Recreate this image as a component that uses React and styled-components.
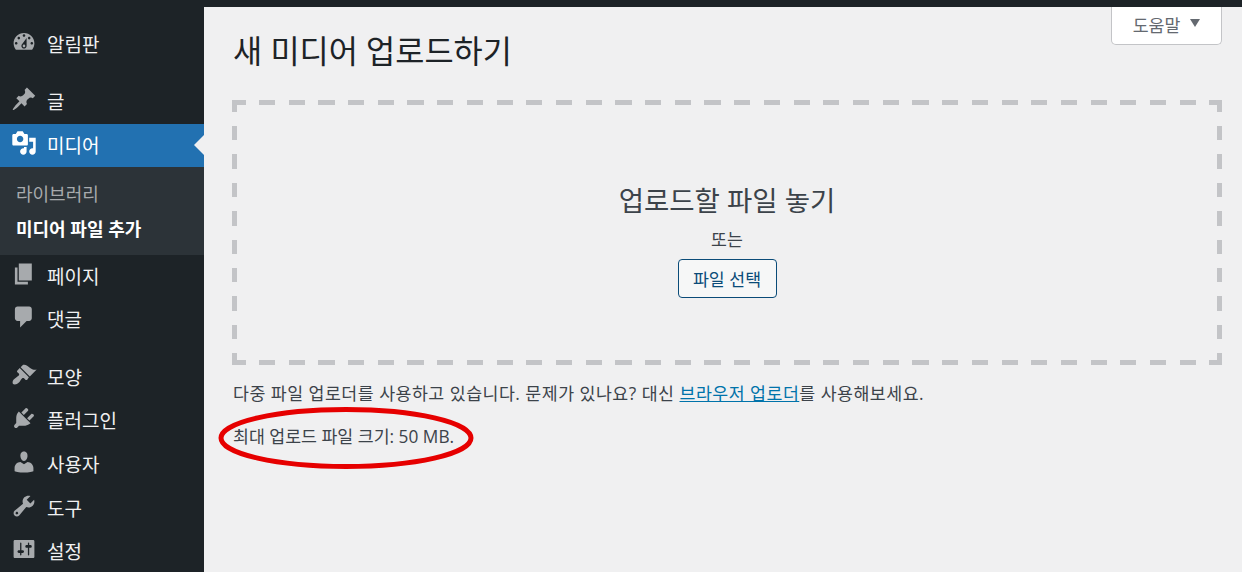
import styled, { createGlobalStyle } from "styled-components";

const GlobalStyle = createGlobalStyle`
  html, body {
    margin: 0;
    padding: 0;
    height: 100%;
    overflow: hidden;
    background: #f0f0f1;
  }
  body {
    font-family: "Open Sans", "Noto Sans CJK KR", sans-serif;
    color: #3c434a;
  }
`;

const Page = styled.div`
  width: 1242px;
  height: 572px;
  display: flex;
  flex-direction: column;
  overflow: hidden;
`;

const TopBar = styled.div`
  height: 7px;
  flex: none;
  background: #1d2327;
`;

const Body = styled.div`
  flex: 1;
  display: flex;
  min-height: 0;
`;

const Sidebar = styled.nav`
  width: 204px;
  flex: none;
  background: #1d2327;
  padding-top: 16px;
`;

const MenuRow = styled.div`
  position: relative;
  height: ${(p) => (p.$current ? "43px" : "43.7px")};
  box-sizing: border-box;
  margin-top: ${(p) => (p.$gap ? "13.5px" : "0")};
  display: flex;
  align-items: center;
  gap: 10px;
  padding: ${(p) => (p.$current ? "2px" : "1px")} 0 0 11px;
  font-size: 19px;
  line-height: 1;
  color: ${(p) => (p.$current ? "#fff" : "#f0f0f1")};
  background: ${(p) => (p.$current ? "#2271b1" : "transparent")};

  svg {
    width: 26px;
    height: 26px;
    flex: none;
    margin-bottom: ${(p) => (p.$current ? "6px" : "7px")};
    fill: ${(p) => (p.$current ? "#fff" : "#a7aaad")};
  }

  ${(p) =>
    p.$current &&
    `
    &::after {
      content: "";
      position: absolute;
      right: 0;
      top: 50%;
      margin-top: -10px;
      border: 10px solid transparent;
      border-right-color: #f0f0f1;
      border-left-width: 0;
    }
  `}
`;

const SubMenu = styled.div`
  height: 88px;
  box-sizing: border-box;
  padding-top: 9px;
  background: #2c3338;
`;

const SubItem = styled.div`
  height: 35px;
  display: flex;
  align-items: center;
  padding-left: 16px;
  font-size: 18px;
  font-weight: ${(p) => (p.$active ? 700 : 400)};
  color: ${(p) => (p.$active ? "#fff" : "#a7aaad")};
`;

const Main = styled.main`
  position: relative;
  flex: 1;
  padding: 0 20px 0 29px;
  min-width: 0;
`;

const HelpTab = styled.button`
  position: absolute;
  top: 0;
  right: 20px;
  width: 111px;
  height: 38px;
  box-sizing: border-box;
  display: flex;
  align-items: center;
  justify-content: center;
  gap: 10px;
  padding: 0 0 2px;
  background: #fff;
  border: 1px solid #c3c4c7;
  border-top: 0;
  border-radius: 0 0 5px 5px;
  font: inherit;
  font-size: 17.3px;
  color: #646970;
`;

const Caret = styled.span`
  width: 0;
  height: 0;
  margin-top: -3px;
  border-left: 5.5px solid transparent;
  border-right: 5.5px solid transparent;
  border-top: 8px solid #646970;
`;

const Title = styled.h1`
  margin: 0;
  padding-top: 21px;
  height: 71px;
  box-sizing: border-box;
  font-size: 31.7px;
  line-height: 46px;
  font-weight: 400;
  color: #1d2327;
`;

const dashesX =
  "repeating-linear-gradient(90deg, #c3c4c7 0 13.5px, transparent 13.5px 27px, #c3c4c7 27px 29.7px)";
const dashesY =
  "repeating-linear-gradient(180deg, #c3c4c7 0 12px, transparent 12px 26px, #c3c4c7 26px 28.4px)";

const DropZone = styled.section`
  height: 265px;
  margin: 22px 0 0 -1px;
  box-sizing: border-box;
  display: flex;
  flex-direction: column;
  align-items: center;
  padding-top: 81px;
  background:
    ${dashesX} left top / 100% 5px no-repeat,
    ${dashesX} left bottom / 100% 5px no-repeat,
    ${dashesY} left top / 5px 100% no-repeat,
    ${dashesY} right top / 5px 100% no-repeat;
`;

const DropTitle = styled.div`
  font-size: 27.5px;
  line-height: 40px;
  color: #3c434a;
`;

const DropOr = styled.div`
  margin-top: 5px;
  font-size: 17.3px;
  line-height: 28px;
`;

const SelectButton = styled.button`
  width: 99px;
  height: 39px;
  margin-top: 5px;
  padding: 0;
  background: #f6f7f7;
  border: 1px solid #0a4b78;
  border-radius: 4px;
  font: inherit;
  font-size: 17.3px;
  color: #0a4b78;
`;

const Note = styled.p`
  margin: ${(p) => p.$top}px 0 0;
  font-size: 17.3px;
  line-height: 26px;
  letter-spacing: ${(p) => p.$spacing || 0}px;
`;

const NoteLink = styled.a`
  color: #0073aa;
  text-decoration: underline;
`;

const Highlight = styled.svg`
  position: absolute;
  left: 14px;
  top: 399px;
  width: 256px;
  height: 64px;
  pointer-events: none;
`;

const menuPaths = {
  dashboard:
    "M3.76 16h12.48c1.1-1.37 1.76-3.11 1.76-5 0-4.42-3.58-8-8-8s-8 3.58-8 8c0 1.89.66 3.63 1.76 5zM10 4c.55 0 1 .45 1 1s-.45 1-1 1-1-.45-1-1 .45-1 1-1zM6 6c.55 0 1 .45 1 1s-.45 1-1 1-1-.45-1-1 .45-1 1-1zm8 0c.55 0 1 .45 1 1s-.45 1-1 1-1-.45-1-1 .45-1 1-1zm-5.37 5.55L12 7v6c0 1.1-.9 2-2 2s-2-.9-2-2c0-.57.24-1.08.63-1.45zM4 10c.55 0 1 .45 1 1s-.45 1-1 1-1-.45-1-1 .45-1 1-1zm12 0c.55 0 1 .45 1 1s-.45 1-1 1-1-.45-1-1 .45-1 1-1zm-5 3c0-.55-.45-1-1-1s-1 .45-1 1 .45 1 1 1 1-.45 1-1z",
  post: "M10.44 3.02l1.82-1.82 6.36 6.35-1.83 1.82c-1.05-.68-2.48-.57-3.41.36l-.75.75c-.92.93-1.04 2.35-.35 3.41l-1.83 1.82-2.41-2.41-2.8 2.79c-.42.42-3.38 2.71-3.8 2.29s1.86-3.39 2.28-3.81l2.79-2.79L4.1 9.36l1.83-1.82c1.05.69 2.48.57 3.4-.36l.75-.75c.93-.92 1.05-2.35.36-3.41z",
  media:
    "M13 11V4c0-.55-.45-1-1-1h-1.67L9 1H5L3.67 3H2c-.55 0-1 .45-1 1v7c0 .55.45 1 1 1h10c.55 0 1-.45 1-1zM7 4.5c1.38 0 2.5 1.12 2.5 2.5S8.38 9.5 7 9.5 4.5 8.38 4.5 7 5.62 4.5 7 4.5zM14 6h5v10.5c0 1.38-1.12 2.5-2.5 2.5S14 17.88 14 16.5s1.12-2.5 2.5-2.5c.17 0 .34.02.5.05V9h-3V6zm-4 8.05V13h2v3.5c0 1.38-1.12 2.5-2.5 2.5S7 17.88 7 16.5 8.12 14 9.5 14c.17 0 .34.02.5.05z",
  page: "M6 15V2h10v13H6zm-1 1h8v2H3V5h2v11z",
  comments:
    "M5 2h9c1.1 0 2 .9 2 2v7c0 1.1-.9 2-2 2h-2l-5 5v-5H5c-1.1 0-2-.9-2-2V4c0-1.1.9-2 2-2z",
  appearance:
    "M14.48 11.06L7.41 3.99l1.5-1.5c.5-.56 2.3-.47 3.51.32 1.21.8 1.43 1.28 2.91 2.1 1.18.64 2.45 1.26 4.45.85zm-.71.71L6.7 4.7 4.93 6.47c-.39.39-.39 1.02 0 1.41l1.06 1.06c.39.39.39 1.03 0 1.42-.6.6-1.43 1.11-2.21 1.69-.35.26-.7.53-1.01.84C1.43 13.71.83 15.25 1.5 17c1.75.67 3.29.07 4.57-1.21.31-.31.58-.66.84-1.01.58-.78 1.09-1.61 1.69-2.21.39-.39 1.03-.39 1.42 0l1.06 1.06c.39.39 1.02.39 1.41 0z",
  plugins:
    "M13.11 4.36L9.87 7.6 8 5.73l3.24-3.24c.35-.34 1.05-.2 1.56.32.52.51.66 1.21.31 1.55zm-8 1.77l.91-1.12 9.01 9.01-1.19.84c-.71.71-2.63 1.16-3.82 1.16H6.14L4.9 17.26c-.59.59-1.54.59-2.12 0-.59-.58-.59-1.53 0-2.12l1.24-1.24v-3.88c0-1.13.4-3.19 1.09-3.89zm7.26 3.97l3.24-3.24c.34-.35 1.04-.21 1.55.31.52.51.66 1.21.31 1.55l-3.24 3.25z",
  users:
    "M10 9.25c-2.27 0-2.73-3.44-2.73-3.44C7 4.02 7.82 2 9.97 2c2.16 0 2.98 2.02 2.71 3.81 0 0-.41 3.44-2.68 3.44zm0 2.57L12.72 10c2.39 0 4.52 2.33 4.52 4.53v2.49s-3.65 1.13-7.24 1.13c-3.65 0-7.24-1.13-7.24-1.13v-2.49c0-2.25 1.94-4.48 4.47-4.48z",
  tools:
    "M16.68 9.77c-1.34 1.34-3.3 1.67-4.95.99l-5.41 6.52c-.99.99-2.59.99-3.58 0s-.99-2.59 0-3.57l6.52-5.42c-.68-1.65-.35-3.61.99-4.95 1.28-1.28 3.12-1.62 4.72-1.06l-2.89 2.89 2.82 2.82 2.86-2.87c.53 1.58.18 3.39-1.08 4.65zM3.81 16.21c.4.39 1.04.39 1.43 0 .4-.4.4-1.04 0-1.43-.39-.4-1.03-.4-1.43 0-.39.39-.39 1.03 0 1.43z",
  settings:
    "M18 16V4c0-.55-.45-1-1-1H3c-.55 0-1 .45-1 1v12c0 .55.45 1 1 1h14c.55 0 1-.45 1-1zM8 11h1c.55 0 1 .45 1 1s-.45 1-1 1H8v1.5c0 .28-.22.5-.5.5s-.5-.22-.5-.5V13H6c-.55 0-1-.45-1-1s.45-1 1-1h1V5.5c0-.28.22-.5.5-.5s.5.22.5.5V11zm5-2h-1c-.55 0-1-.45-1-1s.45-1 1-1h1V5.5c0-.28.22-.5.5-.5s.5.22.5.5V7h1c.55 0 1 .45 1 1s-.45 1-1 1h-1v5.5c0 .28-.22.5-.5.5s-.5-.22-.5-.5V9z",
};

const MenuIcon = ({ name }) => (
  <svg viewBox="0 0 20 20" aria-hidden="true">
    <path d={menuPaths[name]} />
  </svg>
);

const App = () => {
  return (
    <Page>
      <GlobalStyle />
      <TopBar />
      <Body>
        <Sidebar>
          <MenuRow>
            <MenuIcon name="dashboard" />
            알림판
          </MenuRow>
          <MenuRow $gap>
            <MenuIcon name="post" />글
          </MenuRow>
          <MenuRow $current>
            <MenuIcon name="media" />
            미디어
          </MenuRow>
          <SubMenu>
            <SubItem>라이브러리</SubItem>
            <SubItem $active>미디어 파일 추가</SubItem>
          </SubMenu>
          <MenuRow>
            <MenuIcon name="page" />
            페이지
          </MenuRow>
          <MenuRow>
            <MenuIcon name="comments" />
            댓글
          </MenuRow>
          <MenuRow $gap>
            <MenuIcon name="appearance" />
            모양
          </MenuRow>
          <MenuRow>
            <MenuIcon name="plugins" />
            플러그인
          </MenuRow>
          <MenuRow>
            <MenuIcon name="users" />
            사용자
          </MenuRow>
          <MenuRow>
            <MenuIcon name="tools" />
            도구
          </MenuRow>
          <MenuRow>
            <MenuIcon name="settings" />
            설정
          </MenuRow>
        </Sidebar>
        <Main>
          <HelpTab>
            도움말 <Caret />
          </HelpTab>
          <Title>새 미디어 업로드하기</Title>
          <DropZone>
            <DropTitle>업로드할 파일 놓기</DropTitle>
            <DropOr>또는</DropOr>
            <SelectButton>파일 선택</SelectButton>
          </DropZone>
          <Note $top={16} $spacing={0.5}>
            다중 파일 업로더를 사용하고 있습니다. 문제가 있나요? 대신{" "}
            <NoteLink href="#">브라우저 업로더</NoteLink>를 사용해보세요.
          </Note>
          <Note $top={17}>최대 업로드 파일 크기: 50 MB.</Note>
          <Highlight viewBox="0 0 256 64">
            <ellipse
              cx="128"
              cy="32"
              rx="125"
              ry="28.5"
              fill="none"
              stroke="#e60000"
              strokeWidth="5"
            />
          </Highlight>
        </Main>
      </Body>
    </Page>
  );
};

export default App;
